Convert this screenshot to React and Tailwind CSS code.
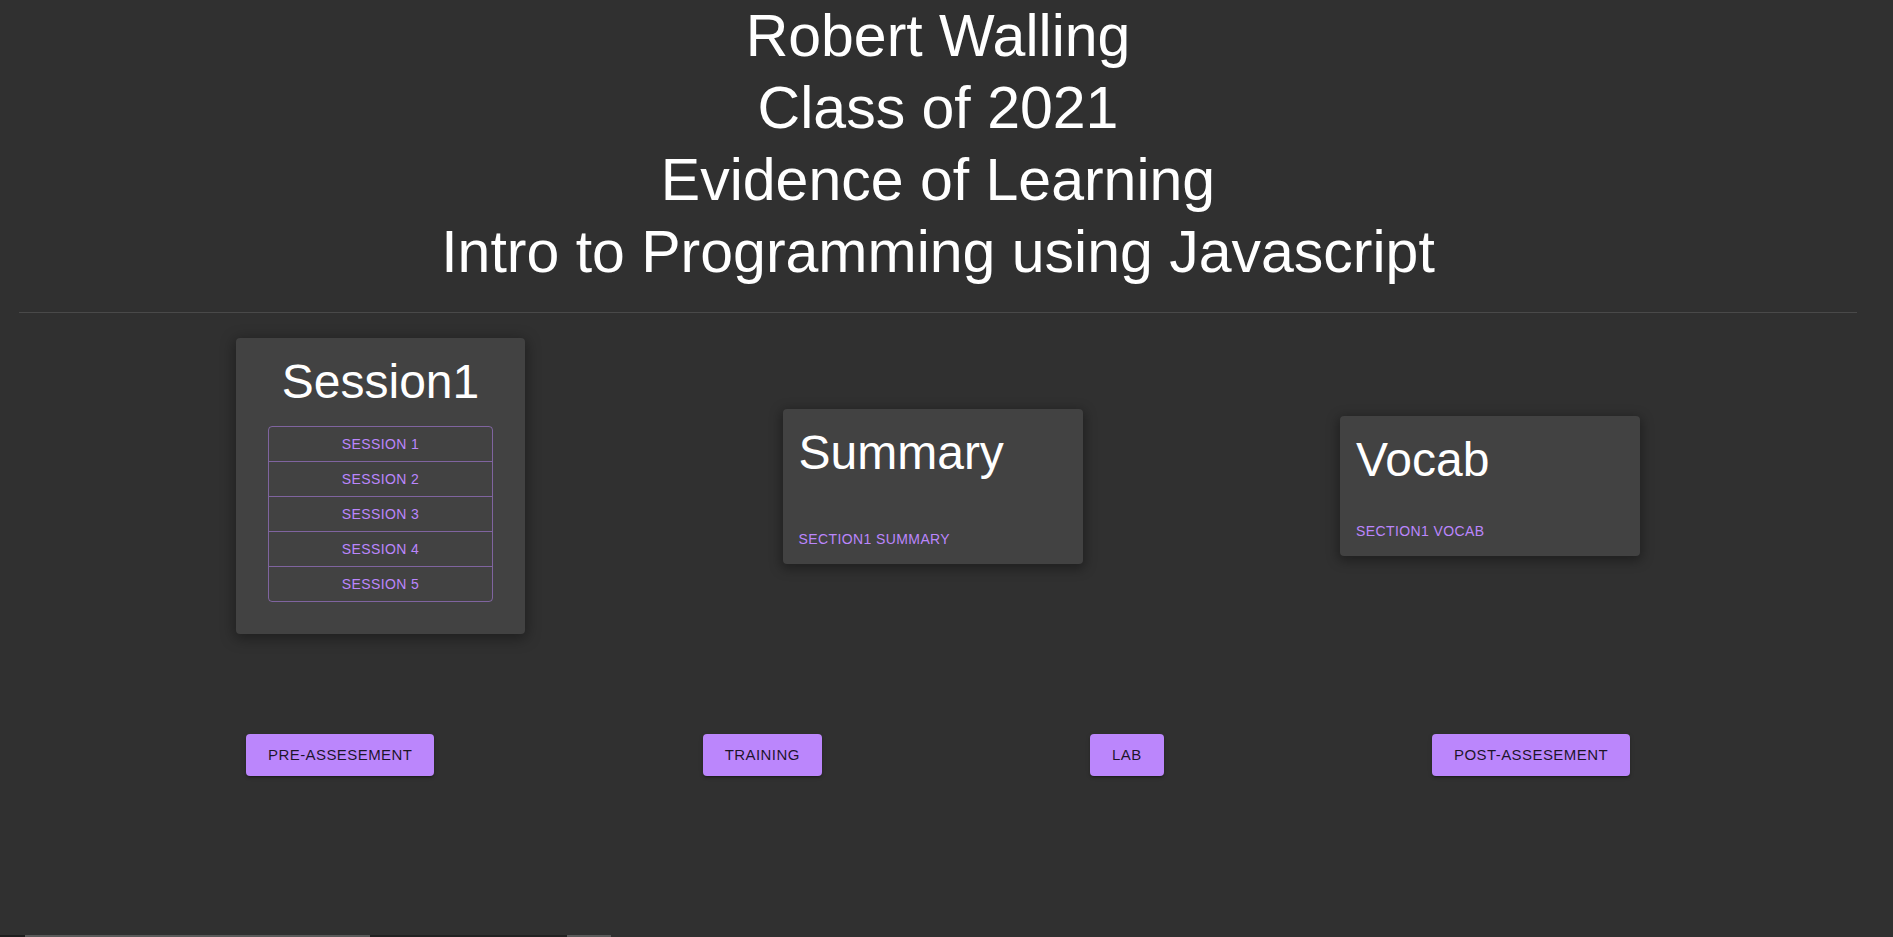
import React from "react";

const sessions = ["Session 1", "Session 2", "Session 3", "Session 4", "Session 5"];
const steps = ["Pre-Assesement", "Training", "Lab", "Post-Assesement"];

function InfoCard({ title, action, height }) {
  return (
    <div className={`w-[300px] ${height} bg-[#424242] rounded flex flex-col justify-between shadow-[0_3px_12px_2px_rgba(0,0,0,0.35)]`}>
      <h2 className="px-4 pt-4 text-[48px] leading-[56px] text-white">{title}</h2>
      <div className="px-4 pb-[13px]">
        <span className="text-[14px] leading-[24px] tracking-[0.4px] uppercase text-[#bb86fc]">{action}</span>
      </div>
    </div>
  );
}

export default function App() {
  return (
    <div
      className="h-screen w-full bg-[#303030] flex flex-col overflow-hidden"
      style={{ fontFamily: '"Liberation Sans", Arial, sans-serif' }}
    >
      <div className="w-[1876px]">
        {/* Header */}
        <header className="text-center text-white text-[59px] leading-[72px]">
          <h1>Robert Walling</h1>
          <h1>Class of 2021</h1>
          <h1>Evidence of Learning</h1>
          <h1>Intro to Programming using Javascript</h1>
        </header>
        <hr className="mt-[24px] mx-[19px] border-0 border-t border-[#494949]" />

        {/* Cards */}
        <section className="mt-[25px] px-[236px] flex items-center justify-between">
          <div className="w-[289px] bg-[#424242] rounded px-8 pt-4 pb-8 shadow-[0_3px_14px_2px_rgba(0,0,0,0.35)]">
            <h2 className="text-center text-[48px] leading-[56px] text-white">Session1</h2>
            <div className="mt-4 border border-[#bb86fc]/50 rounded">
              {sessions.map((s, i) => (
                <div
                  key={s}
                  className={`h-[34px] flex items-center justify-center text-[14px] tracking-[0.4px] uppercase text-[#bb86fc] ${i > 0 ? "border-t border-[#bb86fc]/50 h-[35px]" : ""}`}
                >
                  {s}
                </div>
              ))}
            </div>
          </div>
          <InfoCard title="Summary" action="Section1 Summary" height="h-[155px]" />
          <InfoCard title="Vocab" action="Section1 Vocab" height="h-[140px]" />
        </section>

        {/* Steps */}
        <section className="mt-[100px] px-[246px] flex items-center justify-between">
          {steps.map((s) => (
            <button
              key={s}
              className="h-[42px] px-[22px] rounded bg-[#bb86fc] text-[15px] leading-[26px] tracking-[0.43px] uppercase text-black/85 shadow-[0_3px_1px_-2px_rgba(0,0,0,0.2),0_2px_2px_0_rgba(0,0,0,0.14),0_1px_5px_0_rgba(0,0,0,0.12)]"
            >
              {s}
            </button>
          ))}
        </section>
      </div>

      {/* bottom strip */}
      <div className="mt-auto h-[2px] flex">
        <div className="w-[25px] bg-[#1e1e1e]" />
        <div className="w-[345px] bg-[#5a5a5a]" />
        <div className="w-[197px] bg-[#222222]" />
        <div className="w-[44px] bg-[#5a5a5a]" />
      </div>
    </div>
  );
}
